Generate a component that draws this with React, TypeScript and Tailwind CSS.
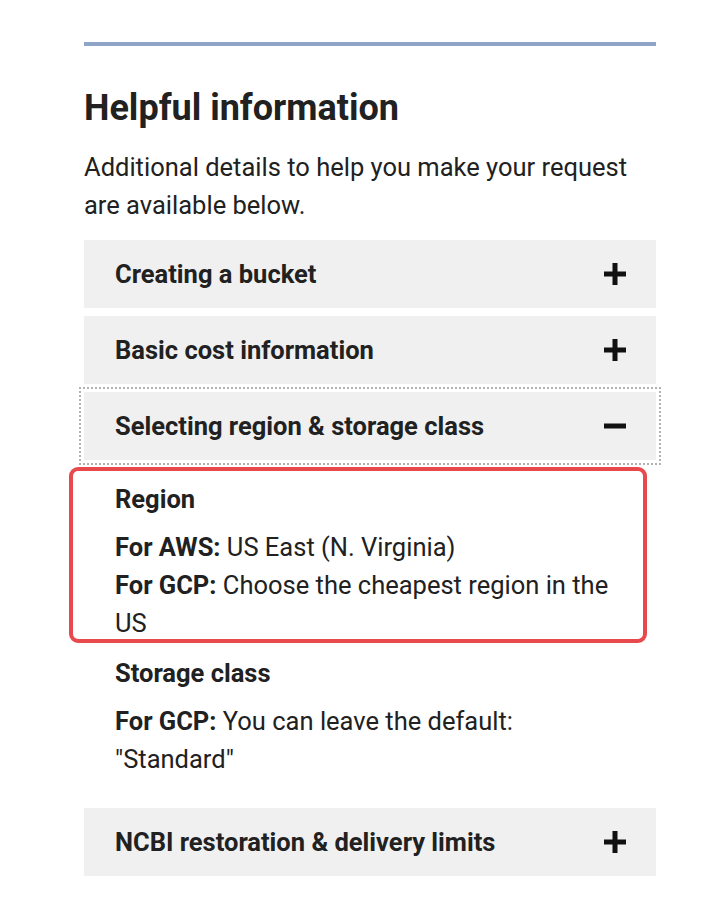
import React from "react";

const font = { fontFamily: "Roboto, 'Noto Sans', sans-serif" };

function PlusIcon() {
  return (
    <svg width="22" height="22" viewBox="0 0 22 22" className="shrink-0">
      <rect x="0" y="8.5" width="22" height="5" fill="#111" />
      <rect x="8.5" y="0" width="5" height="22" fill="#111" />
    </svg>
  );
}

function MinusIcon() {
  return (
    <svg width="22" height="22" viewBox="0 0 22 22" className="shrink-0">
      <rect x="0" y="8.5" width="22" height="5" fill="#111" />
    </svg>
  );
}

function Header({ title, open, focused }: { title: string; open?: boolean; focused?: boolean }) {
  return (
    <div
      className={
        "flex h-[68px] items-center justify-between bg-[#f0f0f0] pl-[31px] pr-[30px] " +
        (focused ? "outline-2 outline-dotted outline-[#b3b3b3] outline-offset-[3px]" : "")
      }
    >
      <span className="text-[25.5px] font-bold text-[#212121]">{title}</span>
      {open ? <MinusIcon /> : <PlusIcon />}
    </div>
  );
}

export default function App() {
  return (
    <div className="min-h-[912px] w-[710px] bg-white" style={font}>
      <div className="ml-[84px] w-[572px] pt-[42px]">
        <div className="h-[4px] bg-[#8ea5c7]" />
        <h2 className="mt-[43px] text-[36px] font-bold leading-[38px] text-[#212121]">
          Helpful information
        </h2>
        <p className="mt-[21px] text-[25.5px] leading-[38px] text-[#212121]">
          Additional details to help you make your request are available below.
        </p>

        <div className="mt-[16px] flex flex-col gap-[8px]">
          <Header title="Creating a bucket" />
          <Header title="Basic cost information" />
          <div>
            <Header title="Selecting region & storage class" open focused />
            <div className="pt-[20px] pb-[22px] text-[25.5px] leading-[38px] text-[#212121]">
              <div className="relative px-[31px]">
                <div className="font-bold">Region</div>
                <div className="mt-[10px]">
                  <div>
                    <b>For AWS:</b> US East (N. Virginia)
                  </div>
                  <div>
                    <b>For GCP:</b> Choose the cheapest region in the US
                  </div>
                </div>
                <div className="pointer-events-none absolute -top-[13px] -left-[15px] right-[9px] -bottom-[1px] rounded-[9px] border-4 border-[#e8494d]" />
              </div>
              <div className="mt-[12px] px-[31px]">
                <div className="font-bold">Storage class</div>
                <div className="mt-[10px]">
                  <b>For GCP:</b> You can leave the default: "Standard"
                </div>
              </div>
            </div>
          </div>
          <Header title="NCBI restoration & delivery limits" />
        </div>
      </div>
    </div>
  );
}
